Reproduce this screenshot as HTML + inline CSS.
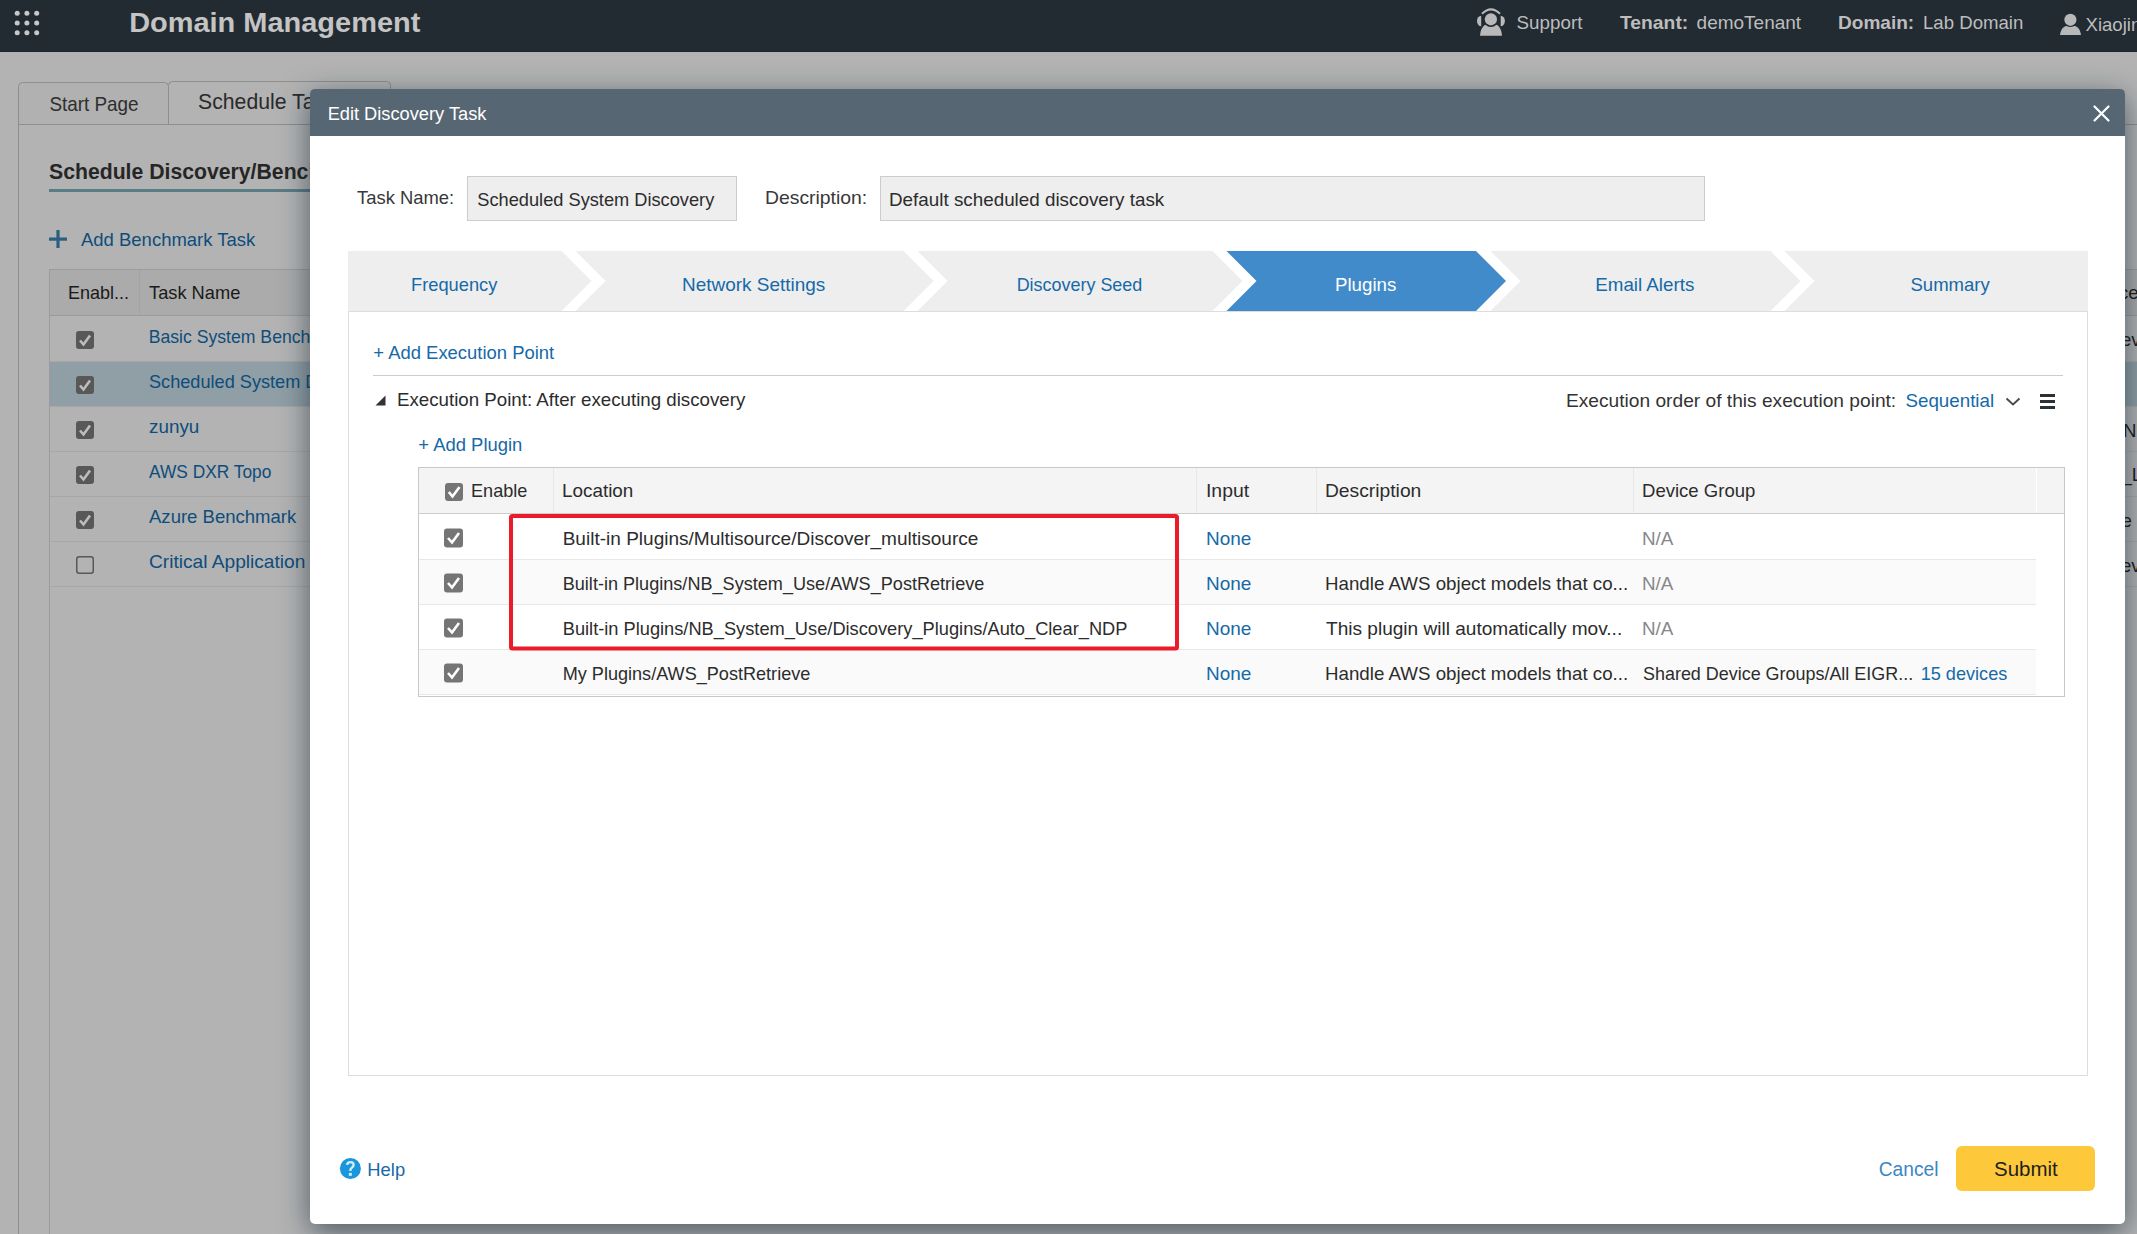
<!DOCTYPE html>
<html><head><meta charset="utf-8">
<style>
html,body{margin:0;padding:0;}
body{width:2137px;height:1234px;overflow:hidden;position:relative;background:#b3b3b3;font-family:"Liberation Sans",sans-serif;}
.abs{position:absolute;}
svg{position:absolute;left:0;top:0;overflow:visible;font-family:"Liberation Sans",sans-serif;}
#dlg{position:absolute;left:310px;top:89px;width:1815px;height:1135px;background:#fff;border-radius:5px;box-shadow:0 8px 30px rgba(15,35,50,0.62);overflow:hidden;}
</style></head><body>
<!-- PAGE LAYER -->
<svg width="2137" height="1234" viewBox="0 0 2137 1234">
  <rect x="0" y="0" width="2137" height="52" fill="#222b32"/>
  <rect x="0" y="51" width="2137" height="1" fill="#1d252b"/>
  <g fill="#c8c8c8">
    <circle cx="17.2" cy="13.3" r="2.5"/><circle cx="26.9" cy="13.3" r="2.5"/><circle cx="36.7" cy="13.3" r="2.5"/>
    <circle cx="17.2" cy="23" r="2.5"/><circle cx="26.9" cy="23" r="2.5"/><circle cx="36.7" cy="23" r="2.5"/>
    <circle cx="17.2" cy="32.7" r="2.5"/><circle cx="26.9" cy="32.7" r="2.5"/><circle cx="36.7" cy="32.7" r="2.5"/>
  </g>
  <!-- support icon -->
  <g fill="#b9b9b9">
    <path d="M1482 13.8 Q1491 5.0 1500 13.8" fill="none" stroke="#b9b9b9" stroke-width="2"/>
    <path d="M1481.2 15.7 A4.2 5.25 0 0 0 1481.2 26.2 Z"/>
    <path d="M1500.7 15.7 A4.2 5.25 0 0 1 1500.7 26.2 Z"/>
    <path d="M1480 35.8 C1480.6 29.5 1482.5 26.2 1485.5 24.8 L1496.5 24.8 C1499.5 26.2 1501.4 29.5 1502 35.8 Z"/>
    <circle cx="1490.9" cy="19.3" r="7.7" fill="#222b32"/>
    <circle cx="1490.9" cy="19.3" r="6.1"/>
  </g>
  <!-- user icon -->
  <g fill="#b8b8b8">
    <path d="M2060 35 C2060.8 30 2062.5 27 2066 25.9 L2075 25.9 C2078.5 27 2080.2 30 2081 35 Z"/>
    <circle cx="2070.4" cy="19.8" r="7.3" fill="#222b32"/>
    <circle cx="2070.4" cy="19.8" r="6.1"/>
  </g>
  <!-- tabs -->
  <path d="M18.5 124.5 V86.5 Q18.5 82.5 22.5 82.5 H164.5 Q168.5 82.5 168.5 86.5 V124.5" fill="#b1b1b1" stroke="#8e8e8e" stroke-width="1"/>
  <path d="M168.5 124.5 V85.5 Q168.5 81.5 172.5 81.5 H386.5 Q390.5 81.5 390.5 85.5 V124.5" fill="#b3b3b3" stroke="#8e8e8e" stroke-width="1"/>
  <rect x="18" y="124" width="2119" height="1" fill="#8e8e8e"/>

  <rect x="18" y="124" width="1" height="1110" fill="#8e8e8e"/>
  <!-- title underline -->
  <rect x="49" y="189" width="400" height="3" fill="#5a7c84"/>
  <!-- plus -->
  <rect x="49" y="237.5" width="18" height="3.2" fill="#2a5f80"/>
  <rect x="56.4" y="230" width="3.2" height="18" fill="#2a5f80"/>
  <!-- page table -->
  <rect x="49.5" y="269.5" width="2100" height="1000" fill="none" stroke="#9b9b9b"/>
  <rect x="50" y="270" width="2100" height="45" fill="#ababab"/>
  <rect x="49" y="315" width="2100" height="1" fill="#9b9b9b"/>
  <rect x="139" y="270" width="1" height="45" fill="#a3a3a3"/>
  <rect x="50" y="361" width="2100" height="45" fill="#909ea5"/>
  <g fill="#a7a7a7">
    <rect x="50" y="361" width="2100" height="1"/>
    <rect x="50" y="406" width="2100" height="1"/>
    <rect x="50" y="451" width="2100" height="1"/>
    <rect x="50" y="496" width="2100" height="1"/>
    <rect x="50" y="541" width="2100" height="1"/>
    <rect x="50" y="586" width="2100" height="1"/>
  </g>
  <g>
    <rect x="76" y="331" width="18" height="18" rx="3" fill="#585858"/>
    <path d="M80 340.5 L83.5 344.5 L90 335.5" fill="none" stroke="#bdbdbd" stroke-width="2.6"/>
    <rect x="76" y="376" width="18" height="18" rx="3" fill="#585858"/>
    <path d="M80 385.5 L83.5 389.5 L90 380.5" fill="none" stroke="#bdbdbd" stroke-width="2.6"/>
    <rect x="76" y="421" width="18" height="18" rx="3" fill="#585858"/>
    <path d="M80 430.5 L83.5 434.5 L90 425.5" fill="none" stroke="#bdbdbd" stroke-width="2.6"/>
    <rect x="76" y="466" width="18" height="18" rx="3" fill="#585858"/>
    <path d="M80 475.5 L83.5 479.5 L90 470.5" fill="none" stroke="#bdbdbd" stroke-width="2.6"/>
    <rect x="76" y="511" width="18" height="18" rx="3" fill="#585858"/>
    <path d="M80 520.5 L83.5 524.5 L90 515.5" fill="none" stroke="#bdbdbd" stroke-width="2.6"/>
    <rect x="76.75" y="556.75" width="16.5" height="16.5" rx="2.5" fill="none" stroke="#585858" stroke-width="1.5"/>
  </g>
<text x="129.15" y="31.80" font-size="27.7" font-weight="bold" fill="#c4c4c4" textLength="291.18" lengthAdjust="spacingAndGlyphs">Domain Management</text>
<text x="1516.60" y="29.20" font-size="18.6" fill="#bdbdbd" textLength="65.76" lengthAdjust="spacingAndGlyphs">Support</text>
<text x="1620.00" y="29.20" font-size="18.6" font-weight="bold" fill="#bdbdbd" textLength="68.24" lengthAdjust="spacingAndGlyphs">Tenant:</text>
<text x="1696.60" y="29.20" font-size="18.6" fill="#bdbdbd" textLength="104.55" lengthAdjust="spacingAndGlyphs">demoTenant</text>
<text x="1837.97" y="29.00" font-size="18.6" font-weight="bold" fill="#bdbdbd" textLength="76.25" lengthAdjust="spacingAndGlyphs">Domain:</text>
<text x="1923.00" y="29.00" font-size="18.6" fill="#bdbdbd" textLength="100.34" lengthAdjust="spacingAndGlyphs">Lab Domain</text>
<text x="2085.50" y="31.20" font-size="18.6" fill="#bdbdbd" textLength="55.79" lengthAdjust="spacingAndGlyphs">Xiaojin</text>
<text x="49.40" y="110.90" font-size="21" fill="#2e2e2e" textLength="89.21" lengthAdjust="spacingAndGlyphs">Start Page</text>
<text x="198.06" y="108.60" font-size="22.5" fill="#2a2a2a" textLength="137.60" lengthAdjust="spacingAndGlyphs">Schedule Task</text>
<text x="49.00" y="179.00" font-size="22.3" font-weight="bold" fill="#262626" textLength="387.53" lengthAdjust="spacingAndGlyphs">Schedule Discovery/Benchmark Tasks</text>
<text x="81.00" y="246.00" font-size="18.6" fill="#0e4d7b" textLength="174.30" lengthAdjust="spacingAndGlyphs">Add Benchmark Task</text>
<text x="68.03" y="299.00" font-size="18.6" fill="#1a1a1a" textLength="61.10" lengthAdjust="spacingAndGlyphs">Enabl...</text>
<text x="149.00" y="299.00" font-size="18.6" fill="#1a1a1a" textLength="91.33" lengthAdjust="spacingAndGlyphs">Task Name</text>
<text x="148.65" y="342.80" font-size="18.6" fill="#0e4d7b" textLength="200.93" lengthAdjust="spacingAndGlyphs">Basic System Benchmark</text>
<text x="149.00" y="387.80" font-size="18.6" fill="#0e4d7b" textLength="235.96" lengthAdjust="spacingAndGlyphs">Scheduled System Discovery</text>
<text x="149.00" y="432.80" font-size="18.6" fill="#0e4d7b" textLength="50.35" lengthAdjust="spacingAndGlyphs">zunyu</text>
<text x="149.00" y="477.80" font-size="18.6" fill="#0e4d7b" textLength="122.32" lengthAdjust="spacingAndGlyphs">AWS DXR Topo</text>
<text x="149.00" y="522.80" font-size="18.6" fill="#0e4d7b" textLength="147.30" lengthAdjust="spacingAndGlyphs">Azure Benchmark</text>
<text x="149.00" y="567.80" font-size="18.6" fill="#0e4d7b" textLength="156.35" lengthAdjust="spacingAndGlyphs">Critical Application</text>
<text x="2119.00" y="299.00" font-size="18.6" fill="#1a1a1a" textLength="19.63" lengthAdjust="spacingAndGlyphs">ce</text>
<text x="2121.00" y="346.00" font-size="18.6" fill="#1a1a1a" textLength="19.63" lengthAdjust="spacingAndGlyphs">ev</text>
<text x="2123.00" y="437.00" font-size="18.6" fill="#1a1a1a" textLength="13.42" lengthAdjust="spacingAndGlyphs">N</text>
<text x="2121.50" y="481.00" font-size="18.6" fill="#1a1a1a" textLength="20.67" lengthAdjust="spacingAndGlyphs">_L</text>
<text x="2121.50" y="527.30" font-size="18.6" fill="#1a1a1a" textLength="10.34" lengthAdjust="spacingAndGlyphs">e</text>
<text x="2121.00" y="572.20" font-size="18.6" fill="#1a1a1a" textLength="19.63" lengthAdjust="spacingAndGlyphs">ev</text>
</svg>

<!-- DIALOG -->
<div id="dlg"></div>
<svg width="2137" height="1234" viewBox="0 0 2137 1234">
  <path d="M310 136 V94 Q310 89 315 89 H2120 Q2125 89 2125 94 V136 Z" fill="#566673"/>
  <g stroke="#ffffff" stroke-width="2.2" stroke-linecap="round">
    <line x1="2094.5" y1="106.5" x2="2108.5" y2="120.5"/>
    <line x1="2108.5" y1="106.5" x2="2094.5" y2="120.5"/>
  </g>
  <rect x="467.5" y="176.5" width="269" height="44" fill="#eeeeee" stroke="#cccccc"/>
  <rect x="880.5" y="176.5" width="824" height="44" fill="#eeeeee" stroke="#cccccc"/>
  <!-- stepper -->
  <g>
    <polygon points="348,251 561.5,251 591.5,281 561.5,311 348,311" fill="#eeeeee"/>
    <polygon points="575.5,251 903.5,251 933.5,281 903.5,311 575.5,311 605.5,281" fill="#eeeeee"/>
    <polygon points="917.5,251 1212.5,251 1242.5,281 1212.5,311 917.5,311 947.5,281" fill="#eeeeee"/>
    <polygon points="1226.5,251 1476,251 1506,281 1476,311 1226.5,311 1256.5,281" fill="#428bca"/>
    <polygon points="1490.5,251 1770.5,251 1800.5,281 1770.5,311 1490.5,311 1520.5,281" fill="#eeeeee"/>
    <polygon points="1784.5,251 2088,251 2088,311 1784.5,311 1814.5,281" fill="#eeeeee"/>
  </g>
  <!-- panel border -->
  <rect x="348.5" y="311.5" width="1739" height="764" fill="none" stroke="#dddddd"/>
  <rect x="373" y="375" width="1690" height="1" fill="#cccccc"/>
  <polygon points="375.5,405.5 385.5,405.5 385.5,395.5" fill="#333333"/>
  <path d="M2006.5 398.5 L2013 404.5 L2019.5 398.5" fill="none" stroke="#484848" stroke-width="1.9"/>
  <g fill="#2b3137">
    <rect x="2040" y="394" width="15" height="3"/>
    <rect x="2040" y="400" width="15" height="3"/>
    <rect x="2040" y="406" width="15" height="3"/>
  </g>
  <!-- plugin table -->
  <rect x="418" y="467" width="1647" height="230" fill="#ffffff"/>
  <g fill="#c8c8c8">
    <rect x="418" y="467" width="1647" height="1"/>
    <rect x="418" y="696" width="1647" height="1"/>
    <rect x="418" y="467" width="1" height="230"/>
    <rect x="2064" y="467" width="1" height="230"/>
  </g>
  <rect x="419" y="468" width="1645" height="45" fill="#f4f4f4"/>
  <rect x="419" y="513" width="1645" height="1" fill="#cccccc"/>
  <rect x="419" y="560" width="1617" height="44" fill="#fafafa"/>
  <rect x="419" y="650" width="1617" height="44" fill="#fafafa"/>
  <g fill="#e8e8e8">
    <rect x="419" y="559" width="1617" height="1"/>
    <rect x="419" y="604" width="1617" height="1"/>
    <rect x="419" y="649" width="1617" height="1"/>
    <rect x="419" y="694" width="1617" height="1"/>
    <rect x="553" y="468" width="1" height="45"/>
    <rect x="1196" y="468" width="1" height="45"/>
    <rect x="1316" y="468" width="1" height="45"/>
    <rect x="1633" y="468" width="1" height="45"/>
    <rect x="2036" y="468" width="1" height="45" fill="#ffffff"/>
  </g>
  <g>
    <rect x="445" y="483" width="18" height="18" rx="3" fill="#757575"/>
    <path d="M448.8 492 L452.5 496.5 L459.5 487" fill="none" stroke="#fff" stroke-width="2.6"/>
    <rect x="444" y="528.5" width="19" height="19" rx="3" fill="#757575"/>
    <path d="M448 538 L452 542.5 L459 533" fill="none" stroke="#fff" stroke-width="2.6"/>
    <rect x="444" y="573.5" width="19" height="19" rx="3" fill="#757575"/>
    <path d="M448 583 L452 587.5 L459 578" fill="none" stroke="#fff" stroke-width="2.6"/>
    <rect x="444" y="618.5" width="19" height="19" rx="3" fill="#757575"/>
    <path d="M448 628 L452 632.5 L459 623" fill="none" stroke="#fff" stroke-width="2.6"/>
    <rect x="444" y="663.5" width="19" height="19" rx="3" fill="#757575"/>
    <path d="M448 673 L452 677.5 L459 668" fill="none" stroke="#fff" stroke-width="2.6"/>
  </g>
  <!-- red highlight -->
  <rect x="511" y="516" width="666" height="132.6" rx="1.5" fill="none" stroke="#ea1b2a" stroke-width="4"/>
  <!-- help icon -->
  <circle cx="350.4" cy="1168.5" r="10.5" fill="#1a97dc"/>
  <path d="M347.1 1164.9 Q347.3 1162.1 350.4 1162.1 Q353.6 1162.1 353.6 1164.8 Q353.6 1166.6 351.8 1167.7 Q350.3 1168.6 350.3 1170.9" fill="none" stroke="#d2ebf8" stroke-width="2.4"/>
  <rect x="348.9" y="1172.9" width="2.9" height="2.9" fill="#d2ebf8"/>
  <!-- submit -->
  <rect x="1956" y="1146" width="139" height="45" rx="6" fill="#fdc93a"/>
<text x="327.63" y="120.00" font-size="18.8" fill="#ffffff" textLength="158.78" lengthAdjust="spacingAndGlyphs">Edit Discovery Task</text>
<text x="357.00" y="204.20" font-size="18.6" fill="#383838" textLength="97.15" lengthAdjust="spacingAndGlyphs">Task Name:</text>
<text x="477.30" y="205.80" font-size="18.6" fill="#2c2c2c" textLength="237.01" lengthAdjust="spacingAndGlyphs">Scheduled System Discovery</text>
<text x="764.96" y="204.20" font-size="18.6" fill="#383838" textLength="102.26" lengthAdjust="spacingAndGlyphs">Description:</text>
<text x="888.99" y="205.80" font-size="18.6" fill="#2c2c2c" textLength="275.30" lengthAdjust="spacingAndGlyphs">Default scheduled discovery task</text>
<text x="411.02" y="291.20" font-size="18.6" fill="#1569a8" textLength="86.29" lengthAdjust="spacingAndGlyphs">Frequency</text>
<text x="681.98" y="291.20" font-size="18.6" fill="#1569a8" textLength="143.32" lengthAdjust="spacingAndGlyphs">Network Settings</text>
<text x="1016.63" y="291.20" font-size="18.6" fill="#1569a8" textLength="125.69" lengthAdjust="spacingAndGlyphs">Discovery Seed</text>
<text x="1334.99" y="291.20" font-size="18.6" fill="#ffffff" textLength="61.30" lengthAdjust="spacingAndGlyphs">Plugins</text>
<text x="1595.30" y="291.20" font-size="18.6" fill="#1569a8" textLength="98.99" lengthAdjust="spacingAndGlyphs">Email Alerts</text>
<text x="1910.50" y="291.20" font-size="18.6" fill="#1569a8" textLength="79.30" lengthAdjust="spacingAndGlyphs">Summary</text>
<text x="373.30" y="359.00" font-size="18.6" fill="#1569a8" textLength="180.88" lengthAdjust="spacingAndGlyphs">+ Add Execution Point</text>
<text x="397.00" y="406.20" font-size="18.6" fill="#2c2c2c" textLength="348.30" lengthAdjust="spacingAndGlyphs">Execution Point: After executing discovery</text>
<text x="1565.97" y="407.20" font-size="18.6" fill="#333333" textLength="330.23" lengthAdjust="spacingAndGlyphs">Execution order of this execution point:</text>
<text x="1905.50" y="407.20" font-size="18.6" fill="#1569a8" textLength="88.64" lengthAdjust="spacingAndGlyphs">Sequential</text>
<text x="418.30" y="450.80" font-size="18.6" fill="#1569a8" textLength="104.03" lengthAdjust="spacingAndGlyphs">+ Add Plugin</text>
<text x="471.03" y="496.60" font-size="18.6" fill="#2c2c2c" textLength="56.30" lengthAdjust="spacingAndGlyphs">Enable</text>
<text x="561.98" y="496.60" font-size="18.6" fill="#2c2c2c" textLength="71.36" lengthAdjust="spacingAndGlyphs">Location</text>
<text x="1205.96" y="496.60" font-size="18.6" fill="#2c2c2c" textLength="43.17" lengthAdjust="spacingAndGlyphs">Input</text>
<text x="1324.96" y="496.60" font-size="18.6" fill="#2c2c2c" textLength="96.39" lengthAdjust="spacingAndGlyphs">Description</text>
<text x="1642.00" y="496.60" font-size="18.6" fill="#2c2c2c" textLength="113.34" lengthAdjust="spacingAndGlyphs">Device Group</text>
<text x="562.68" y="544.90" font-size="18.6" fill="#2c2c2c" textLength="415.67" lengthAdjust="spacingAndGlyphs">Built-in Plugins/Multisource/Discover_multisource</text>
<text x="1205.98" y="544.90" font-size="18.6" fill="#1569a8" textLength="45.37" lengthAdjust="spacingAndGlyphs">None</text>
<text x="1641.99" y="544.90" font-size="18.6" fill="#888888" textLength="31.41" lengthAdjust="spacingAndGlyphs">N/A</text>
<text x="562.73" y="589.90" font-size="18.6" fill="#2c2c2c" textLength="421.60" lengthAdjust="spacingAndGlyphs">Built-in Plugins/NB_System_Use/AWS_PostRetrieve</text>
<text x="1205.98" y="589.90" font-size="18.6" fill="#1569a8" textLength="45.37" lengthAdjust="spacingAndGlyphs">None</text>
<text x="1325.00" y="589.90" font-size="18.6" fill="#2c2c2c" textLength="303.17" lengthAdjust="spacingAndGlyphs">Handle AWS object models that co...</text>
<text x="1641.99" y="589.90" font-size="18.6" fill="#888888" textLength="31.41" lengthAdjust="spacingAndGlyphs">N/A</text>
<text x="562.72" y="634.90" font-size="18.6" fill="#2c2c2c" textLength="564.68" lengthAdjust="spacingAndGlyphs">Built-in Plugins/NB_System_Use/Discovery_Plugins/Auto_Clear_NDP</text>
<text x="1205.98" y="634.90" font-size="18.6" fill="#1569a8" textLength="45.37" lengthAdjust="spacingAndGlyphs">None</text>
<text x="1326.00" y="634.90" font-size="18.6" fill="#2c2c2c" textLength="296.20" lengthAdjust="spacingAndGlyphs">This plugin will automatically mov...</text>
<text x="1641.99" y="634.90" font-size="18.6" fill="#888888" textLength="31.41" lengthAdjust="spacingAndGlyphs">N/A</text>
<text x="562.73" y="679.90" font-size="18.6" fill="#2c2c2c" textLength="247.60" lengthAdjust="spacingAndGlyphs">My Plugins/AWS_PostRetrieve</text>
<text x="1205.98" y="679.90" font-size="18.6" fill="#1569a8" textLength="45.37" lengthAdjust="spacingAndGlyphs">None</text>
<text x="1325.00" y="679.90" font-size="18.6" fill="#2c2c2c" textLength="303.17" lengthAdjust="spacingAndGlyphs">Handle AWS object models that co...</text>
<text x="1643.00" y="679.90" font-size="18.6" fill="#2c2c2c" textLength="270.12" lengthAdjust="spacingAndGlyphs">Shared Device Groups/All EIGR...</text>
<text x="1920.63" y="679.90" font-size="18.6" fill="#1569a8" textLength="86.66" lengthAdjust="spacingAndGlyphs">15 devices</text>
<text x="367.39" y="1176.00" font-size="18.2" fill="#1569a8" textLength="37.72" lengthAdjust="spacingAndGlyphs">Help</text>
<text x="1878.76" y="1176.00" font-size="20.5" fill="#3a86c4" textLength="59.76" lengthAdjust="spacingAndGlyphs">Cancel</text>
<text x="1994.00" y="1176.00" font-size="20.5" fill="#1e1e1e" textLength="63.70" lengthAdjust="spacingAndGlyphs">Submit</text>
</svg>
</body></html>
